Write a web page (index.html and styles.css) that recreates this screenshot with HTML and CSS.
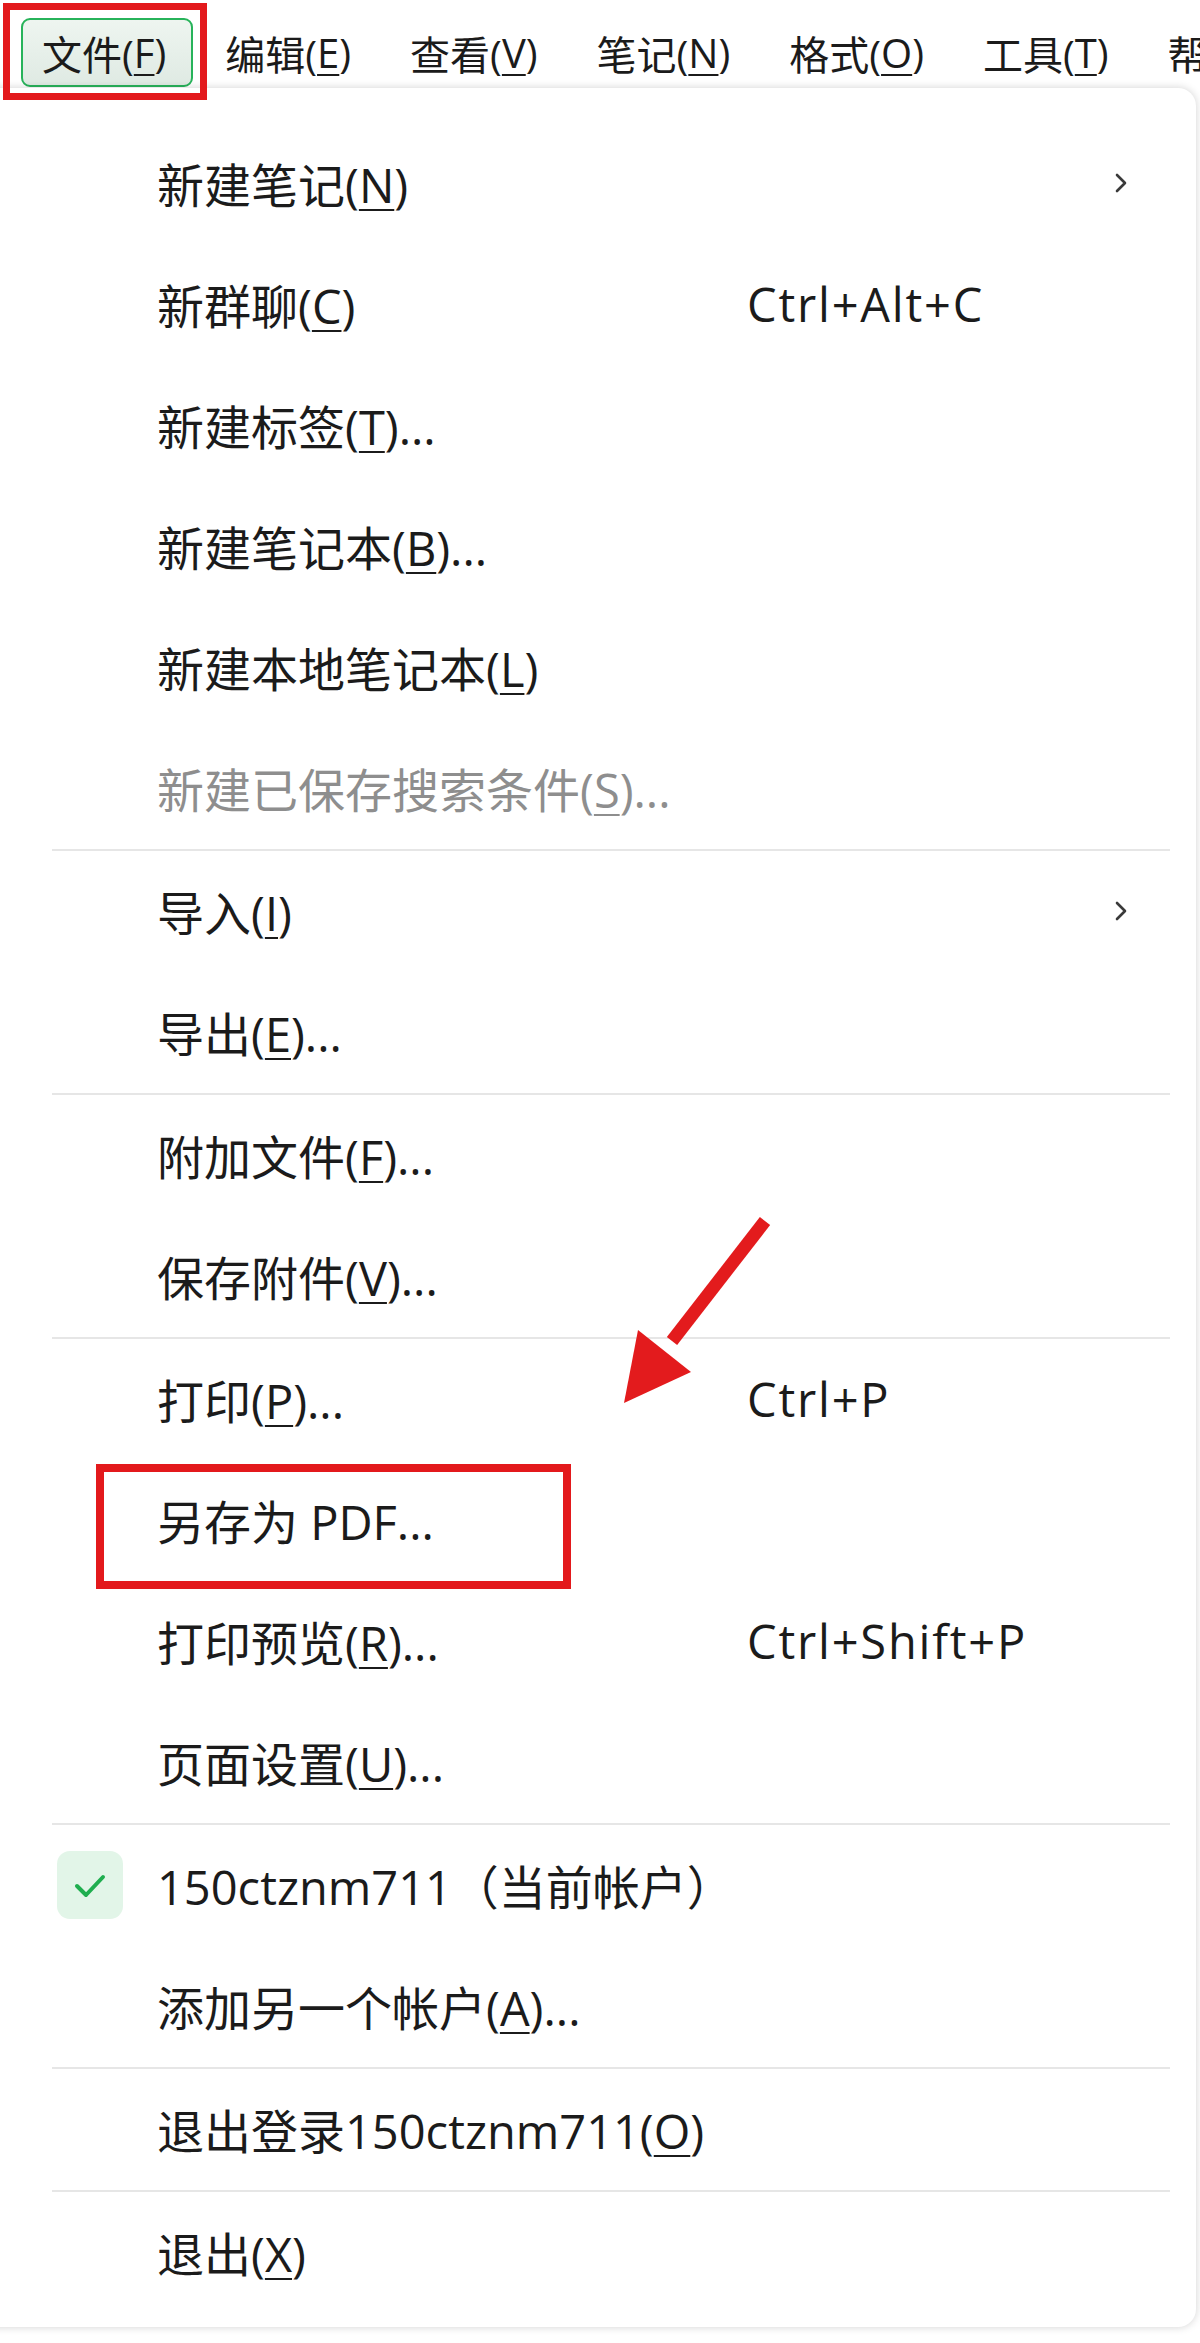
FILE: index.html
```html
<!DOCTYPE html>
<html lang="zh-CN">
<head>
<meta charset="utf-8">
<title>文件菜单</title>
<link rel="stylesheet" href="styles.css">
</head>
<body>
<div class="screen">
  <div class="menubar">
    <div class="mb-item active">文件(<u>F</u>)</div>
    <div class="mb-item">编辑(<u>E</u>)</div>
    <div class="mb-item">查看(<u>V</u>)</div>
    <div class="mb-item">笔记(<u>N</u>)</div>
    <div class="mb-item">格式(<u>O</u>)</div>
    <div class="mb-item">工具(<u>T</u>)</div>
    <div class="mb-item">帮助(<u>H</u>)</div>
  </div>
  <div class="panel">
    <div class="item"><span class="icon"></span><span class="label">新建笔记(<u>N</u>)</span><span class="shortcut"></span><span class="sub"><svg width="16" height="24" viewBox="0 0 16 24"><path d="M4 4 L12 12 L4 20" fill="none" stroke="#3a3a3a" stroke-width="2.6" stroke-linecap="round" stroke-linejoin="round"/></svg></span></div>
    <div class="item"><span class="icon"></span><span class="label">新群聊(<u>C</u>)</span><span class="shortcut">Ctrl+Alt+C</span><span class="sub"></span></div>
    <div class="item"><span class="icon"></span><span class="label">新建标签(<u>T</u>)...</span><span class="shortcut"></span><span class="sub"></span></div>
    <div class="item"><span class="icon"></span><span class="label">新建笔记本(<u>B</u>)...</span><span class="shortcut"></span><span class="sub"></span></div>
    <div class="item"><span class="icon"></span><span class="label">新建本地笔记本(<u>L</u>)</span><span class="shortcut"></span><span class="sub"></span></div>
    <div class="item disabled"><span class="icon"></span><span class="label">新建已保存搜索条件(<u>S</u>)...</span><span class="shortcut"></span><span class="sub"></span></div>
    <div class="sep"></div>
    <div class="item"><span class="icon"></span><span class="label">导入(<u>I</u>)</span><span class="shortcut"></span><span class="sub"><svg width="16" height="24" viewBox="0 0 16 24"><path d="M4 4 L12 12 L4 20" fill="none" stroke="#3a3a3a" stroke-width="2.6" stroke-linecap="round" stroke-linejoin="round"/></svg></span></div>
    <div class="item"><span class="icon"></span><span class="label">导出(<u>E</u>)...</span><span class="shortcut"></span><span class="sub"></span></div>
    <div class="sep"></div>
    <div class="item"><span class="icon"></span><span class="label">附加文件(<u>F</u>)...</span><span class="shortcut"></span><span class="sub"></span></div>
    <div class="item"><span class="icon"></span><span class="label">保存附件(<u>V</u>)...</span><span class="shortcut"></span><span class="sub"></span></div>
    <div class="sep"></div>
    <div class="item"><span class="icon"></span><span class="label">打印(<u>P</u>)...</span><span class="shortcut">Ctrl+P</span><span class="sub"></span></div>
    <div class="item"><span class="icon"></span><span class="label">另存为 PDF...</span><span class="shortcut"></span><span class="sub"></span></div>
    <div class="item"><span class="icon"></span><span class="label">打印预览(<u>R</u>)...</span><span class="shortcut">Ctrl+Shift+P</span><span class="sub"></span></div>
    <div class="item"><span class="icon"></span><span class="label">页面设置(<u>U</u>)...</span><span class="shortcut"></span><span class="sub"></span></div>
    <div class="sep"></div>
    <div class="item"><span class="icon check"><svg width="40" height="40" viewBox="0 0 40 40"><path d="M7 21 L16 30 L33 12" fill="none" stroke="#1fae4f" stroke-width="4" stroke-linecap="round" stroke-linejoin="round"/></svg></span><span class="label">150ctznm711（当前帐户）</span><span class="shortcut"></span><span class="sub"></span></div>
    <div class="item"><span class="icon"></span><span class="label">添加另一个帐户(<u>A</u>)...</span><span class="shortcut"></span><span class="sub"></span></div>
    <div class="sep"></div>
    <div class="item"><span class="icon"></span><span class="label">退出登录150ctznm711(<u>O</u>)</span><span class="shortcut"></span><span class="sub"></span></div>
    <div class="sep"></div>
    <div class="item"><span class="icon"></span><span class="label">退出(<u>X</u>)</span><span class="shortcut"></span><span class="sub"></span></div>
  </div>
  <div class="anno-box anno-file"></div>
  <div class="anno-box anno-pdf"></div>
  <svg class="anno-arrow" width="200" height="220" viewBox="0 0 200 220">
    <line x1="165" y1="21" x2="72" y2="141" stroke="#e31b1d" stroke-width="13"/>
    <polygon points="24,203 38,130 91,172" fill="#e31b1d"/>
  </svg>
</div>
</body>
</html>
```

FILE: styles.css
```css
html, body {
  margin: 0;
  padding: 0;
  background: #ffffff;
}

body {
  font-family: "Open Sans", "Noto Sans CJK SC", sans-serif;
  color: #1b1b1b;
}

.screen {
  position: relative;
  width: 1200px;
  height: 2343px;
  overflow: hidden;
  background: #ffffff;
}

/* ---------- menu bar ---------- */
.menubar {
  display: flex;
  height: 88px;
  box-sizing: border-box;
  padding: 18px 0 1px 21px;
  font-size: 40px;
  white-space: nowrap;
  background: #ffffff;
  overflow: hidden;
}

.mb-item {
  display: flex;
  align-items: center;
  flex: none;
  height: 69px;
  box-sizing: border-box;
  padding: 0 25px 0 19px;
  margin-right: 11px;
  border: 2px solid transparent;
  border-radius: 9px;
}

.mb-item.active {
  border-color: #27b35a;
  background: linear-gradient(#eef5f0, #dfeae3);
}

u {
  text-decoration-thickness: 2px;
  text-underline-offset: 6px;
}

/* ---------- dropdown panel ---------- */
.panel {
  position: relative;
  margin-left: -20px;
  width: 1216px;
  box-sizing: border-box;
  padding: 35px 0 14px;
  background: #ffffff;
  border-radius: 0 18px 18px 0;
  box-shadow: 0 0 8px rgba(0, 0, 0, 0.18);
  font-size: 47px;
}

.item {
  display: flex;
  align-items: center;
  height: 121px;
  box-sizing: border-box;
  padding: 0 67px 2px 77px;
  white-space: nowrap;
}

.item.disabled {
  color: #8e8e8e;
}

.icon {
  flex: none;
  width: 66px;
  margin-right: 34px;
}

.check {
  height: 68px;
  border-radius: 13px;
  background: #e2f5e8;
  display: flex;
  align-items: center;
  justify-content: center;
}

.label {
  flex: none;
  width: 590px;
}

.shortcut {
  flex: 1;
  letter-spacing: 1.8px;
}

.sub {
  flex: none;
  width: 16px;
  display: flex;
  align-items: center;
}

.sep {
  height: 2px;
  margin: 0 26px 0 72px;
  background: #e6e6e6;
}

/* ---------- annotations ---------- */
.anno-box {
  position: absolute;
  box-sizing: border-box;
  border: 8px solid #e3191c;
}

.anno-file {
  left: 3px;
  top: 3px;
  width: 204px;
  height: 97px;
  border-width: 7px;
}

.anno-pdf {
  left: 96px;
  top: 1464px;
  width: 475px;
  height: 125px;
}

.anno-arrow {
  position: absolute;
  left: 600px;
  top: 1200px;
}
```
